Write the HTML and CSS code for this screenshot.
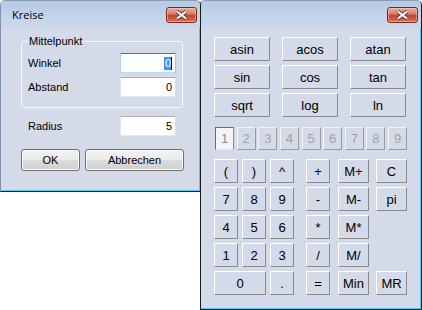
FILE: index.html
```html
<!DOCTYPE html>
<html lang="de">
<head>
    <meta charset="UTF-8">
    <title>Kreise</title>
    <link rel="stylesheet" href="styles.css">
</head>
<body>
    <!-- Rechner (hinteres Fenster) -->
    <div class="win calc">
        <div class="titlebar">
            <span class="title"></span>
            <div class="close">
                <svg width="13" height="10" viewBox="0 0 13 10">
                    <path d="M2 1.5 L11 8.5 M11 1.5 L2 8.5" stroke="#5b3a33" stroke-width="4"/>
                    <path d="M2 1.5 L11 8.5 M11 1.5 L2 8.5" stroke="#fff" stroke-width="2.2"/>
                </svg>
            </div>
        </div>
        <div class="client calc-body">
            <div class="fn-grid">
                <button class="key">asin</button>
                <button class="key">acos</button>
                <button class="key">atan</button>
                <button class="key">sin</button>
                <button class="key">cos</button>
                <button class="key">tan</button>
                <button class="key">sqrt</button>
                <button class="key">log</button>
                <button class="key">ln</button>
            </div>

            <div class="digits">
                <span class="digit on">1</span>
                <span class="digit">2</span>
                <span class="digit">3</span>
                <span class="digit">4</span>
                <span class="digit">5</span>
                <span class="digit">6</span>
                <span class="digit">7</span>
                <span class="digit">8</span>
                <span class="digit">9</span>
            </div>

            <div class="keys">
                <button class="key">(</button>
                <button class="key">)</button>
                <button class="key">^</button>
                <button class="key">+</button>
                <button class="key wide">M+</button>
                <button class="key wide">C</button>

                <button class="key">7</button>
                <button class="key">8</button>
                <button class="key">9</button>
                <button class="key">-</button>
                <button class="key wide">M-</button>
                <button class="key wide">pi</button>

                <button class="key">4</button>
                <button class="key">5</button>
                <button class="key">6</button>
                <button class="key">*</button>
                <button class="key wide">M*</button>
                <span></span>

                <button class="key">1</button>
                <button class="key">2</button>
                <button class="key">3</button>
                <button class="key">/</button>
                <button class="key wide">M/</button>
                <span></span>

                <button class="key zero">0</button>
                <button class="key">.</button>
                <button class="key">=</button>
                <button class="key wide">Min</button>
                <button class="key wide">MR</button>
            </div>
        </div>
    </div>

    <!-- Dialog Kreise (aktives Fenster) -->
    <div class="win dialog">
        <div class="titlebar">
            <span class="title">Kreise</span>
            <div class="close">
                <svg width="13" height="10" viewBox="0 0 13 10">
                    <path d="M2 1.5 L11 8.5 M11 1.5 L2 8.5" stroke="#5b3a33" stroke-width="4"/>
                    <path d="M2 1.5 L11 8.5 M11 1.5 L2 8.5" stroke="#fff" stroke-width="2.2"/>
                </svg>
            </div>
        </div>
        <div class="client dialog-body">
            <fieldset class="group">
                <legend>Mittelpunkt</legend>
                <div class="field-row">
                    <span>Winkel</span>
                    <div class="textbox focus"><span class="sel">0</span><span class="caret"></span></div>
                </div>
                <div class="field-row">
                    <span>Abstand</span>
                    <div class="textbox">0</div>
                </div>
            </fieldset>

            <div class="field-row radius">
                <span>Radius</span>
                <div class="textbox">5</div>
            </div>

            <div class="actions">
                <button class="btn ok">OK</button>
                <button class="btn cancel">Abbrechen</button>
            </div>
        </div>
    </div>
</body>
</html>
```

FILE: styles.css
```css
* {
    box-sizing: border-box;
}

body {
    margin: 0;
    width: 422px;
    height: 310px;
    overflow: hidden;
    position: relative;
    background: #fff;
    font-family: 'Liberation Sans', Arial, sans-serif;
}

/* Fensterrahmen im Stil von Vista Basic */
.win {
    position: absolute;
    top: 0;
    display: flex;
    flex-direction: column;
    background: #d4dae7;
    border: 1px solid #1a1a1a;
    border-top-color: #8e9cb1;
    border-left-color: #8493a8;
    border-radius: 5px 5px 0 0;
    box-shadow: inset -1px -1px 0 #4ccaf0;
}

.dialog {
    left: 0;
    width: 201px;
    height: 192px;
    z-index: 2;
}

.calc {
    left: 200px;
    width: 222px;
    height: 310px;
    border-left-color: #1a1a1a;
}

.titlebar {
    flex: none;
    height: 27px;
    display: flex;
    align-items: center;
    justify-content: space-between;
    padding: 0 3px 0 11px;
    background: linear-gradient(#b5cae6, #c4d4ea 60%, #c9d7ea);
    border-radius: 4px 4px 0 0;
}

.title {
    font-family: 'Open Sans', sans-serif;
    font-size: 11px;
    color: #000;
}

.close {
    width: 31px;
    height: 16px;
    display: flex;
    align-items: center;
    justify-content: center;
    border: 1px solid #7a2618;
    border-radius: 3px;
    background: linear-gradient(#e9ab9b 0%, #d97a64 45%, #c4432b 50%, #cf5a40 80%, #dd806a 100%);
    box-shadow: inset 0 0 0 1px rgba(255, 220, 210, 0.45);
}

.client {
    flex: 1;
}

/* Dialog */
.dialog-body {
    padding: 7px 0 0 20px;
    font-size: 11px;
    color: #000;
}

.group {
    width: 162px;
    margin: 0;
    padding: 5px 6px 10px 6px;
    border: 1px solid #f6f8fb;
    border-radius: 3px;
}

.group legend {
    padding: 0 1px;
    line-height: 13px;
}

.field-row {
    display: flex;
    justify-content: space-between;
    align-items: center;
    height: 20px;
}

.group .field-row + .field-row {
    margin-top: 4px;
}

.radius {
    width: 148px;
    margin: 8px 0 0 7px;
}

.textbox {
    width: 56px;
    height: 20px;
    display: flex;
    justify-content: flex-end;
    align-items: center;
    padding-right: 3px;
    background: #fff;
    border: 1px solid;
    border-color: #abadb3 #dbdfe6 #e3e9ef #e2e3ea;
    font-size: 11px;
}

.textbox.focus {
    border-color: #3d7bad #a4c9e3 #b7d9ed #b5cfe7;
}

.sel {
    background: #3399ff;
    color: #fff;
    line-height: 13px;
    padding: 0 0 0 1px;
}

.caret {
    width: 1px;
    height: 13px;
    background: #000;
}

.actions {
    display: flex;
    gap: 5px;
    margin-top: 13px;
}

.btn {
    height: 22px;
    padding: 0;
    font-family: 'Liberation Sans', Arial, sans-serif;
    font-size: 11px;
    color: #000;
    border: 1px solid #707070;
    border-radius: 3px;
    background: linear-gradient(#f2f2f2 0%, #ebebeb 50%, #dddddd 51%, #cfcfcf 100%);
    box-shadow: inset 0 0 0 1px #fbfbfb;
}

.ok {
    width: 59px;
}

.cancel {
    width: 99px;
}

/* Rechner */
.calc-body {
    padding: 9px 0 0 13px;
}

.key {
    height: 24px;
    padding: 0;
    font-family: 'Liberation Sans', Arial, sans-serif;
    font-size: 13px;
    color: #000;
    background: #d4dae7;
    border: 1px solid;
    border-color: #fff #8a8a8a #8a8a8a #fff;
}

.fn-grid {
    display: grid;
    grid-template-columns: repeat(3, 56px);
    grid-auto-rows: 24px;
    gap: 4px 12px;
}

.digits {
    display: flex;
    justify-content: space-between;
    width: 192px;
    margin: 10px 0 0 1px;
}

.digit {
    width: 19px;
    height: 23px;
    display: flex;
    align-items: center;
    justify-content: center;
    font-size: 13px;
    color: #a3a3a3;
    border: 1px solid;
    border-color: #f4f5f8 #9a9a9a #9a9a9a #f4f5f8;
}

.digit.on {
    background: #f3f4f7;
    color: #8c8c8c;
    border-color: #6d6d6d #8a8a8a #e8e8e8 #6d6d6d;
}

.keys {
    display: grid;
    grid-template-columns: 28px 28px 36px 32px 38px 31px;
    grid-auto-rows: 24px;
    row-gap: 4px;
    margin-top: 9px;
}

.keys .key {
    width: 24px;
}

.keys .wide {
    width: 31px;
}

.keys .zero {
    grid-column: span 2;
    width: 52px;
}
```
